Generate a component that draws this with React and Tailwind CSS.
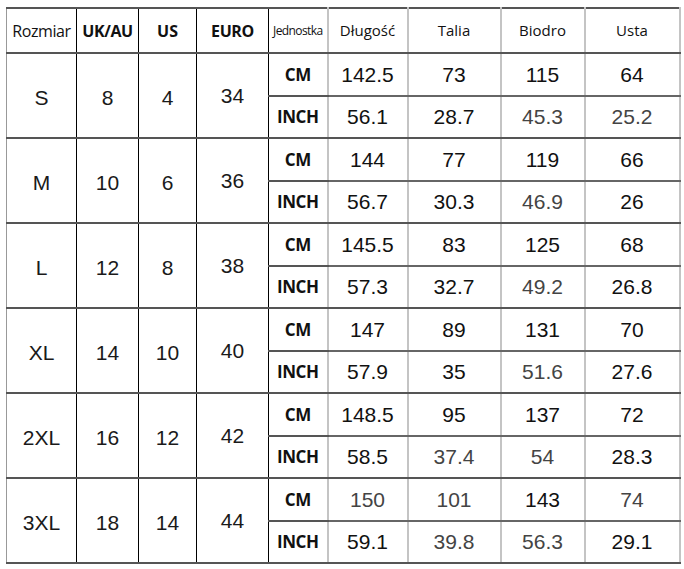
const rows = [
  { size: 'S', uk: '8', us: '4', eu: '34', cm: ['142.5', '73', '115', '64'], inch: ['56.1', '28.7', '45.3', '25.2'] },
  { size: 'M', uk: '10', us: '6', eu: '36', cm: ['144', '77', '119', '66'], inch: ['56.7', '30.3', '46.9', '26'] },
  { size: 'L', uk: '12', us: '8', eu: '38', cm: ['145.5', '83', '125', '68'], inch: ['57.3', '32.7', '49.2', '26.8'] },
  { size: 'XL', uk: '14', us: '10', eu: '40', cm: ['147', '89', '131', '70'], inch: ['57.9', '35', '51.6', '27.6'] },
  { size: '2XL', uk: '16', us: '12', eu: '42', cm: ['148.5', '95', '137', '72'], inch: ['58.5', '37.4', '54', '28.3'] },
  { size: '3XL', uk: '18', us: '14', eu: '44', cm: ['150', '101', '143', '74'], inch: ['59.1', '39.8', '56.3', '29.1'] },
]

// gray-ish values in the picture
const soft = ['45.3', '25.2', '46.9', '49.2', '51.6', '54', '150', '101', '74', '39.8', '56.3', '37.4']

const num = "font-['Liberation_Sans',sans-serif] text-[21px] text-center"
const head = "font-['Open_Sans',sans-serif] text-center text-[#111]"
const left = 'border-r border-b-2 border-r-black border-b-[#555]'
const grid = 'border-r-2 border-b-2 border-r-[#c4c4c4] border-b-[#555]'

export default function App() {
  return (
    <div className="w-[684px] h-[569px] bg-white pt-[7px] pl-[6px]">
      <table className="table-fixed border-collapse w-[673px] border-t-2 border-l border-t-[#555] border-l-[#999]">
        <colgroup>
          <col className="w-[70px]" />
          <col className="w-[62px]" />
          <col className="w-[58px]" />
          <col className="w-[72px]" />
          <col className="w-[59px]" />
          <col className="w-[80px]" />
          <col className="w-[93px]" />
          <col className="w-[84px]" />
          <col className="w-[95px]" />
        </colgroup>
        <thead>
          <tr className="h-[45px]">
            <th className={`${head} ${left} text-[16px] font-normal tracking-tight`}>Rozmiar</th>
            <th className={`${head} ${left} text-[16px] font-bold tracking-tight`}>UK/AU</th>
            <th className={`${head} ${left} text-[16px] font-bold`}>US</th>
            <th className={`${head} ${left} text-[16px] font-bold tracking-tight`}>EURO</th>
            <th className={`${head} ${grid} text-[12px] font-normal tracking-tighter`}>Jednostka</th>
            <th className={`${head} ${grid} text-[15px] font-normal`}>Długość</th>
            <th className={`${head} ${grid} text-[15px] font-normal`}>Talia</th>
            <th className={`${head} ${grid} text-[15px] font-normal`}>Biodro</th>
            <th className={`${head} ${grid} text-[15px] font-normal`}>Usta</th>
          </tr>
        </thead>
        <tbody className="text-[#1a1a1a]">
          {rows.map((r) => (
            <>
              <tr key={r.size + 'cm'} className="h-[43px]">
                <td rowSpan={2} className={`${num} ${left} pt-1`}>{r.size}</td>
                <td rowSpan={2} className={`${num} ${left} pt-1`}>{r.uk}</td>
                <td rowSpan={2} className={`${num} ${left} pt-1`}>{r.us}</td>
                <td rowSpan={2} className={`${num} ${left}`}>{r.eu}</td>
                <td className={`${head} ${grid} border-b-[#444] text-[17px] font-bold tracking-tight`}>CM</td>
                {r.cm.map((v, i) => (
                  <td key={i} className={`${num} ${grid} border-b-[#666] ${soft.includes(v) ? 'text-[#444]' : 'text-[#111]'}`}>{v}</td>
                ))}
              </tr>
              <tr key={r.size + 'in'} className="h-[42px]">
                <td className={`${head} ${grid} text-[17px] font-bold tracking-tight`}>INCH</td>
                {r.inch.map((v, i) => (
                  <td key={i} className={`${num} ${grid} ${soft.includes(v) ? 'text-[#444]' : 'text-[#111]'}`}>{v}</td>
                ))}
              </tr>
            </>
          ))}
        </tbody>
      </table>
    </div>
  )
}
